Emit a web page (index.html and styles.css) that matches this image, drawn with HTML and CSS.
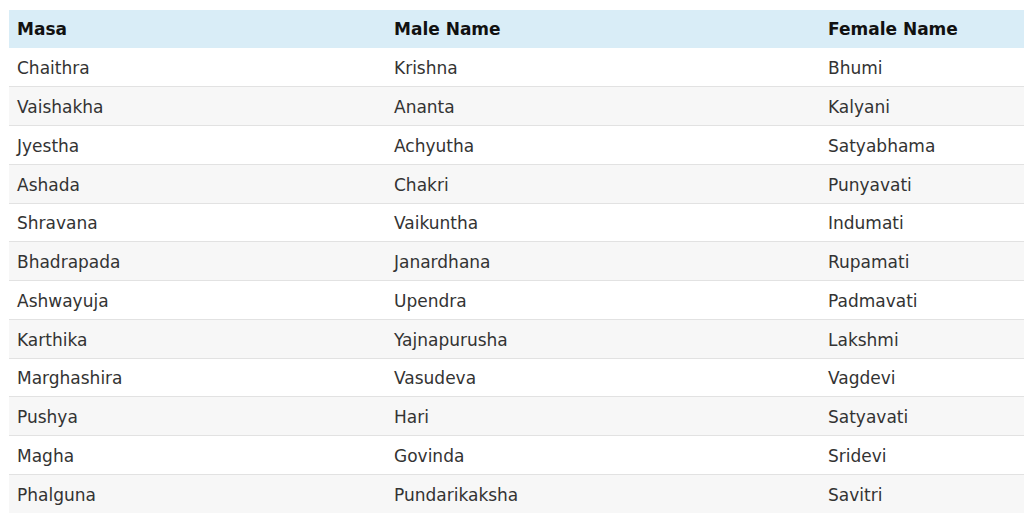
FILE: index.html
```html
<!DOCTYPE html>
<html>
<head>
<meta charset="utf-8">
<link rel="stylesheet" href="styles.css">
</head>
<body>
<table class="names">
  <colgroup><col class="c1"><col class="c2"><col class="c3"></colgroup>
  <thead>
    <tr><th>Masa</th><th>Male Name</th><th>Female Name</th></tr>
  </thead>
  <tbody>
    <tr><td>Chaithra</td><td>Krishna</td><td>Bhumi</td></tr>
    <tr><td>Vaishakha</td><td>Ananta</td><td>Kalyani</td></tr>
    <tr><td>Jyestha</td><td>Achyutha</td><td>Satyabhama</td></tr>
    <tr><td>Ashada</td><td>Chakri</td><td>Punyavati</td></tr>
    <tr><td>Shravana</td><td>Vaikuntha</td><td>Indumati</td></tr>
    <tr><td>Bhadrapada</td><td>Janardhana</td><td>Rupamati</td></tr>
    <tr><td>Ashwayuja</td><td>Upendra</td><td>Padmavati</td></tr>
    <tr><td>Karthika</td><td>Yajnapurusha</td><td>Lakshmi</td></tr>
    <tr><td>Marghashira</td><td>Vasudeva</td><td>Vagdevi</td></tr>
    <tr><td>Pushya</td><td>Hari</td><td>Satyavati</td></tr>
    <tr><td>Magha</td><td>Govinda</td><td>Sridevi</td></tr>
    <tr><td>Phalguna</td><td>Pundarikaksha</td><td>Savitri</td></tr>
  </tbody>
</table>
</body>
</html>
```
FILE: styles.css
```css
html, body {
  margin: 0;
  padding: 0;
  background: #ffffff;
  overflow: hidden;
}
body {
  padding: 10px 0 0 9px;
  font-family: "DejaVu Sans", sans-serif;
  font-size: 17px;
  color: #333333;
}
.names {
  border-collapse: collapse;
  table-layout: fixed;
  width: 1015px;
}
.c1 { width: 377px; }
.c2 { width: 434px; }
.c3 { width: 204px; }
.names th {
  background: #d9edf7;
  color: #111111;
  font-weight: bold;
  text-align: left;
  height: 38px;
  padding: 0 8px;
  box-sizing: border-box;
  vertical-align: middle;
}
.names td {
  height: 38.75px;
  padding: 2px 8px 0;
  box-sizing: border-box;
  vertical-align: middle;
  border-top: 1px solid #e2e2e2;
}
.names tbody tr:first-child td {
  border-top: none;
}
.names tbody tr:nth-child(even) td {
  background: #f7f7f7;
}
```
